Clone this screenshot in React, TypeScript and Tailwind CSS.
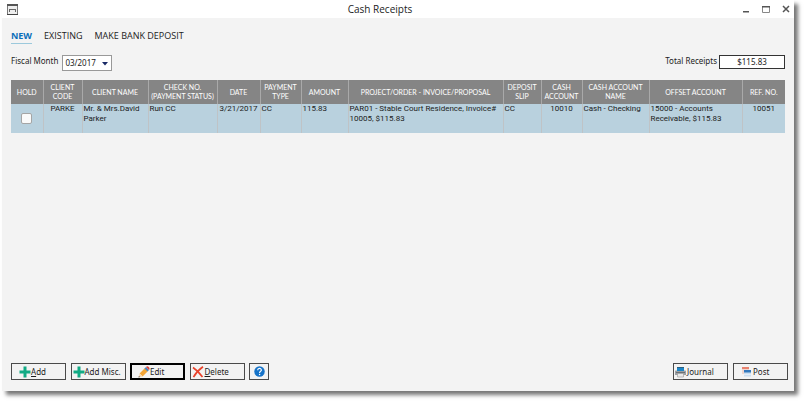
import type { ReactNode } from "react";

const columns = [
  { label: "HOLD", width: "w-[32px]" },
  { label: "CLIENT CODE", width: "w-[39px]" },
  { label: "CLIENT NAME", width: "w-[66px]" },
  { label: "CHECK NO. (PAYMENT STATUS)", width: "w-[69px]" },
  { label: "DATE", width: "w-[43px]" },
  { label: "PAYMENT TYPE", width: "w-[41px]" },
  { label: "AMOUNT", width: "w-[47px]" },
  { label: "PROJECT/ORDER - INVOICE/PROPOSAL", width: "w-[155px]" },
  { label: "DEPOSIT SLIP", width: "w-[38px]" },
  { label: "CASH ACCOUNT", width: "w-[41px]" },
  { label: "CASH ACCOUNT NAME", width: "w-[67px]" },
  { label: "OFFSET ACCOUNT", width: "w-[93px]" },
  { label: "REF. NO.", width: "w-[43px]" },
];

const receipt = [
  { text: "PARKE", center: true },
  { text: "Mr. & Mrs.David Parker" },
  { text: "Run CC" },
  { text: "3/21/2017", center: true },
  { text: "CC" },
  { text: "115.83" },
  { text: "PAR01 - Stable Court Residence, Invoice# 10005, $115.83" },
  { text: "CC" },
  { text: "10010", center: true },
  { text: "Cash - Checking" },
  { text: "15000 - Accounts Receivable, $115.83" },
  { text: "10051", center: true },
];

const PlusIcon = () => (
  <svg viewBox="0 0 12 12" className="size-3 shrink-0">
    <path d="M4.500 .5h3v4h4v3h-4v4h-3v-4h-4v-3h4z" fill="#12ab85" />
  </svg>
);

const PencilIcon = () => (
  <svg viewBox="0 0 12 12" className="size-3 shrink-0">
    <path d="M1.6 7.4 7 2l3 3-5.4 5.4z" fill="#f3a536" />
    <path d="M1.6 7.4 0.6 11.4l4-1z" fill="#f7d7b0" />
    <path d="M0.9 10 0.5 11.5l1.5-.4z" fill="#444" />
    <path d="M6.500 2.500 8 1l3 3-1.500 1.500z" fill="#4488c8" />
    <path d="M8 1c1-1 2-.7 2.700 0s1.300 2 .3 3z" fill="#e0433b" />
  </svg>
);

const CrossIcon = () => (
  <svg viewBox="0 0 12 12" className="size-3 shrink-0">
    <path d="M1 1.500C4 3.500 8 7.500 10.500 11M11 .8C7 3.500 3.500 7.500 1.500 11.200" fill="none" stroke="#e8432c" strokeWidth="1.700" />
  </svg>
);

const PrinterIcon = () => (
  <svg viewBox="0 0 12 12" className="size-3 shrink-0">
    <path d="M2 1h7v4H2z" fill="#1b86c8" />
    <path d="M2 1h7v1H2z" fill="#2c5f80" />
    <path d="M.5 4.500H2V5h7v-.5h1.500L11 5v4H0V5z" fill="#9aa0a5" />
    <path d="M1 6h9v1H1z" fill="#6c7074" />
    <path d="M2.500 7.500h6v3.500h-6z" fill="#e9e9e9" stroke="#999" strokeWidth=".6" />
  </svg>
);

const PostIcon = () => (
  <svg viewBox="0 0 12 12" className="size-3 shrink-0">
    <path d="M1 1h7v7H1z" fill="#f0d5cf" />
    <path d="M1 1h7v2H1z" fill="#e8826f" />
    <path d="M3 4h7v6.500H3z" fill="#cddff0" />
    <path d="M3 4h7v2.500H3z" fill="#3278bd" />
    <path d="M3 8.500h7" stroke="#eef4fa" strokeWidth=".7" />
  </svg>
);

const HelpIcon = () => (
  <svg viewBox="0 0 12 12" className="size-[11px]">
    <circle cx="6" cy="6" r="5.700" fill="#1673c8" />
    <path d="M4 4.700C4 2 8 2 8 4.500 8 5.900 6.100 5.700 6.100 7.500" fill="none" stroke="#fff" strokeWidth="1.300" />
    <circle cx="6.100" cy="9.200" r=".8" fill="#fff" />
  </svg>
);

type ActionProps = {
  icon: ReactNode;
  children: ReactNode;
  className?: string;
};

const Action = ({ icon, children, className = "pl-[7px] border border-[#4a4a4a]" }: ActionProps) => (
  <button type="button" className={`flex h-[17px] w-[55px] items-center whitespace-nowrap ${className}`}>
    {icon}
    <span>{children}</span>
  </button>
);

const TitleBar = () => (
  <header className="flex h-[18px] shrink-0 items-center justify-between bg-white pl-[5px] pr-1">
    <svg viewBox="0 0 11 11" className="size-[11px]">
      <path d="M.5.500h10v10H.5z" fill="#eee" stroke="#777" />
      <path d="M0 0h11v2H0z" fill="#555" />
      <path d="M2 5.500h7M2.500 5v3M8.500 5v3" stroke="#666" fill="none" />
      <path d="M0 10h11v1H0z" fill="#444" />
    </svg>
    <h1 className="font-['Open_Sans',sans-serif] text-[10px] leading-4 text-[#222]">Cash Receipts</h1>
    <div className="flex items-center gap-3 text-[#555]">
      <button type="button" aria-label="Minimize">
        <svg viewBox="0 0 8 8" className="size-2"><path d="M1 6h6v1.500H1z" fill="currentColor" /></svg>
      </button>
      <button type="button" aria-label="Maximize">
        <svg viewBox="0 0 8 8" className="size-2">
          <path d="M.5 1.500h7v6h-7z" fill="none" stroke="#888" />
          <path d="M0 1h8v1.500H0z" fill="currentColor" />
        </svg>
      </button>
      <button type="button" aria-label="Close">
        <svg viewBox="0 0 8 8" className="size-2"><path d="m1 1 6 6M7 1 1 7" stroke="currentColor" strokeWidth="1.500" /></svg>
      </button>
    </div>
  </header>
);

const ReceiptsTable = () => (
  <table className="mt-[9px] w-full table-fixed border-collapse">
    <thead>
      <tr className="h-6 bg-[#858585] font-['Lato','Open_Sans',sans-serif] text-[7px] leading-[9px] text-white">
        {columns.map(({ label, width }) => (
          <th key={label} className={`${width} border-r border-[#a9a9a9] p-0 text-center font-normal last:border-r-0`}>
            {label}
          </th>
        ))}
      </tr>
    </thead>
    <tbody>
      <tr className="h-[29px] bg-[#b9d1de] align-top font-['Roboto','Noto_Sans',sans-serif] text-[8px] leading-[10px]">
        <td className="border-r border-[#bfc3c6] p-0 text-center align-middle">
          <input
            type="checkbox"
            aria-label="Hold"
            className="mx-auto block size-[11px] appearance-none rounded-xs border border-[#a5a5a5] bg-[#fafafa]"
          />
        </td>
        {receipt.map(({ text, center }, index) => (
          <td
            key={index}
            className={`border-r border-[#bfc3c6] p-0 last:border-r-0 ${center ? "text-center" : "pl-px"}`}
          >
            {text}
          </td>
        ))}
      </tr>
    </tbody>
  </table>
);

export default function App() {
  return (
    <div className="flex min-h-screen bg-white pb-[10px] pl-0.5 pr-[10px] font-['Noto_Sans','Open_Sans',sans-serif] text-[8px] text-[#1c1c1c]">
      <div className="flex flex-1 flex-col bg-[#f3f3f3] shadow-[4px_4px_4px_#777]">
        <TitleBar />
        <main className="flex flex-1 flex-col px-[9px] pb-[11px]">
          <nav className="mt-[11px] flex gap-3 font-['Open_Sans',sans-serif] text-[9px] leading-[14px]">
            <a href="#new" className="border-b border-[#9cc9dc] font-bold text-[#0b6fba]">NEW</a>
            <a href="#existing">EXISTING</a>
            <a href="#deposit">MAKE BANK DEPOSIT</a>
          </nav>
          <div className="mt-[11px] flex items-start justify-between leading-3">
            <div className="flex items-start gap-1">
              <label htmlFor="month">Fiscal Month</label>
              <div className="relative">
                <select
                  id="month"
                  className="block h-4 w-[50px] appearance-none border border-[#999] bg-white pl-0.5 text-[8px]"
                >
                  <option>03/2017</option>
                </select>
                <svg viewBox="0 0 6 4" className="pointer-events-none absolute right-1 top-[7px] h-1 w-1.5">
                  <path d="M0 0h6L3 3.500z" fill="#192a66" />
                </svg>
              </div>
            </div>
            <div className="flex items-start gap-0.5">
              <label htmlFor="total">Total Receipts</label>
              <input
                id="total"
                readOnly
                value="$115.83"
                className="h-[14px] w-[66px] border border-[#333] bg-white pb-0.5 text-center"
              />
            </div>
          </div>
          <ReceiptsTable />
          <footer className="-mr-[3px] mt-auto flex justify-between">
            <div className="flex w-[258px] justify-between">
              <Action icon={<PlusIcon />}><u>A</u>dd</Action>
              <Action icon={<PlusIcon />} className="pl-px border border-[#4a4a4a]">Add Misc.</Action>
              <Action icon={<PencilIcon />} className="pl-1.5 border-2 border-black">Edit</Action>
              <Action icon={<CrossIcon />} className="gap-px pl-px border border-[#4a4a4a]"><u>D</u>elete</Action>
              <button
                type="button"
                aria-label="Help"
                className="flex h-[17px] w-5 items-center justify-center border border-[#4a4a4a]"
              >
                <HelpIcon />
              </button>
            </div>
            <div className="flex gap-[5px]">
              <Action icon={<PrinterIcon />} className="pl-px border border-[#4a4a4a]">Journal</Action>
              <Action icon={<PostIcon />}>Post</Action>
            </div>
          </footer>
        </main>
      </div>
    </div>
  );
}
